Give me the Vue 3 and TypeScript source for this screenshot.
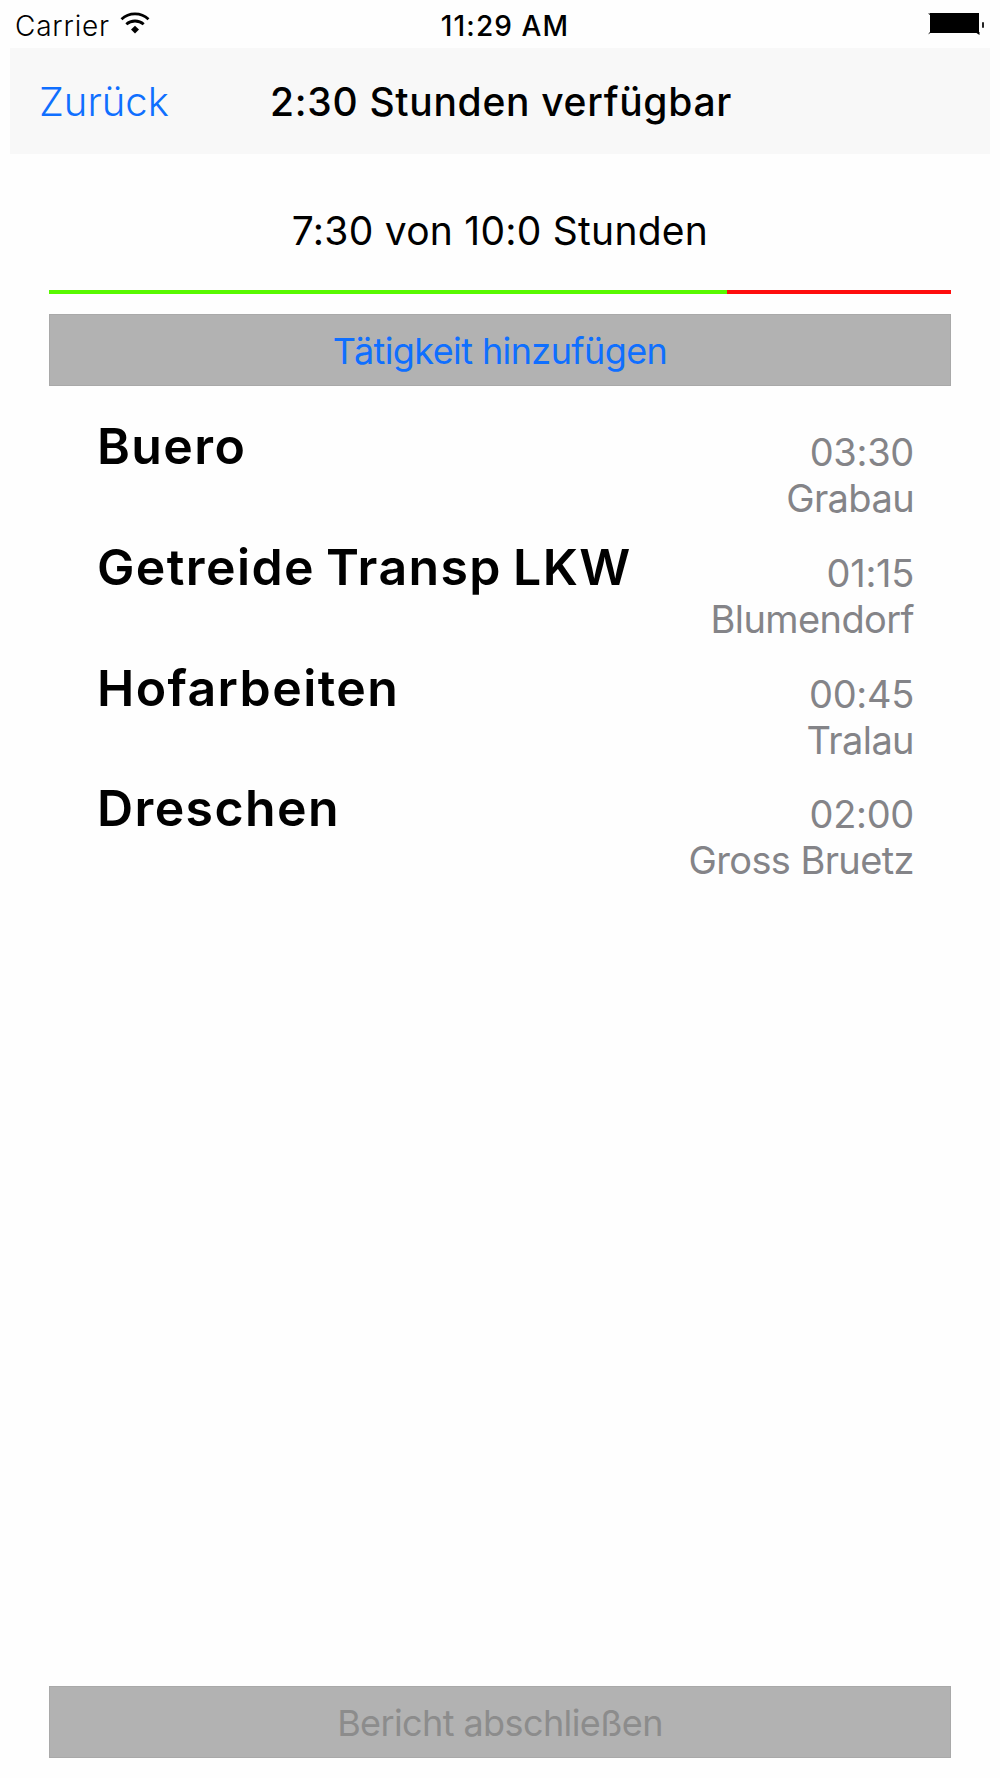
<script setup lang="ts">
interface Activity {
  name: string
  duration: string
  place: string
}

const usedHours = 7.5
const totalHours = 10
const progress = `${(usedHours / totalHours) * 100 + 0.2}%`

const activities: Activity[] = [
  { name: 'Buero', duration: '03:30', place: 'Grabau' },
  { name: 'Getreide Transp LKW', duration: '01:15', place: 'Blumendorf' },
  { name: 'Hofarbeiten', duration: '00:45', place: 'Tralau' },
  { name: 'Dreschen', duration: '02:00', place: 'Gross Bruetz' },
]
</script>

<template>
  <div class="screen">
    <div class="status">
      <div class="carrier">
        <span>Carrier</span>
        <svg class="wifi" viewBox="0 0 30 22" width="30" height="22">
          <path d="M1.500 7.200C9 0.200 21 0.200 28.500 7.200" fill="none" stroke="#000" stroke-width="2.800" />
          <path d="M6.300 12.300C11.200 7.900 18.800 7.900 23.700 12.300" fill="none" stroke="#000" stroke-width="2.800" />
          <path d="M15 13.800L19 17.600L15 21.400L11 17.600Z" />
        </svg>
      </div>
      <span class="clock">11:29 AM</span>
      <svg class="battery" viewBox="0 0 58 24" width="58" height="24">
        <rect x="3" y="1" width="49" height="20" />
        <path d="M1 1.5h4v3zM1 22.500l3-4h3zM48 20h4.500v3z" />
        <rect x="55" y="10" width="2" height="6" rx="1" fill="#222" />
      </svg>
    </div>
    <header class="nav">
      <span class="back">Zurück</span>
      <h1 class="title">2:30 Stunden verfügbar</h1>
    </header>
    <main class="body">
      <p class="summary">7:30 von 10:0 Stunden</p>
      <div class="bar"><div class="fill" :style="{ width: progress }"></div></div>
      <button class="btn add" type="button">Tätigkeit hinzufügen</button>
      <ul class="list">
        <li v-for="item in activities" :key="item.name" class="row">
          <span class="name">{{ item.name }}</span>
          <span class="meta">
            <span class="duration">{{ item.duration }}</span>
            <span class="place">{{ item.place }}</span>
          </span>
        </li>
      </ul>
      <button class="btn finish" type="button" disabled>Bericht abschließen</button>
    </main>
  </div>
</template>

<style>
body {
  background: #fefefe;
}
</style>

<style scoped>
.screen {
  box-sizing: border-box;
  display: flex;
  flex-direction: column;
  width: 1000px;
  height: 1778px;
  overflow: hidden;
  background: #fefefe;
  color: #000;
  font-family: Inter, "Liberation Sans", sans-serif;
  white-space: nowrap;
}
.status {
  display: grid;
  grid-template-columns: 1fr auto 1fr;
  height: 48px;
  padding: 0 15px;
  font-size: 28px;
  line-height: 52px;
}
.carrier {
  display: flex;
  gap: 10px;
  font-weight: 300;
  letter-spacing: 0.8px;
}
.wifi {
  margin-top: 12px;
}
.clock {
  margin-left: 10px;
  font-weight: 500;
  letter-spacing: 1.1px;
}
.battery {
  justify-self: end;
  margin-top: 12px;
}
.nav {
  display: flex;
  height: 106px;
  margin: 0 10px;
  padding-left: 29px;
  background: #f8f8f8;
  line-height: 108px;
}
.back {
  width: 231px;
  color: #0f6fff;
  font-size: 40px;
  font-weight: 300;
}
.title {
  margin: 0;
  font-size: 39px;
  font-weight: 500;
  letter-spacing: 0.7px;
}
.body {
  display: flex;
  flex: 1;
  flex-direction: column;
  padding: 0 49px 20px;
}
.summary {
  margin: 53px 0 0;
  font-size: 39px;
  font-weight: 400;
  letter-spacing: 0.25px;
  line-height: 48px;
  text-align: center;
}
.bar {
  height: 4px;
  margin-top: 35px;
  background: #ff0d0d;
}
.fill {
  height: 100%;
  background: #58f900;
}
.btn {
  box-sizing: border-box;
  height: 72px;
  padding: 2px 0 0;
  border: 1px solid #a9a9a9;
  background: #b2b2b2;
  font: inherit;
  font-size: 36px;
  letter-spacing: -0.6px;
  line-height: 68px;
  text-align: center;
}
.add {
  margin-top: 20px;
  color: #0f6fff;
}
.finish {
  margin-top: auto;
  color: #8c8c8c;
}
.list {
  margin: 24px 0 0;
  padding: 0 37px 0 48px;
  list-style: none;
}
.row {
  display: flex;
  justify-content: space-between;
  height: 120.8px;
}
.name {
  font-size: 50px;
  font-weight: 600;
  letter-spacing: 1.4px;
  line-height: 72px;
  word-spacing: -3px;
}
.meta {
  display: flex;
  flex-direction: column;
  padding-top: 19px;
  color: #848488;
  font-size: 38px;
  font-weight: 400;
  line-height: 46px;
  text-align: right;
}
.duration {
  letter-spacing: -0.3px;
}
.place {
  letter-spacing: -0.6px;
}
</style>
